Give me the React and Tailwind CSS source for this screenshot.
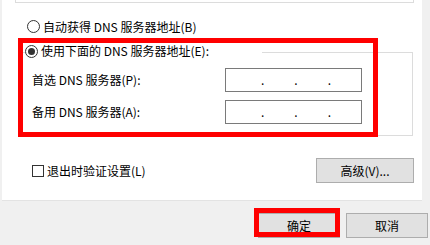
export default function App() {
  const font = "font-['Noto_Sans_CJK_SC','Noto_Sans',sans-serif]"

  const Radio = ({ checked }) => (
    <div className="w-[13px] h-[13px] rounded-full border border-[#333] bg-white flex items-center justify-center shrink-0">
      {checked && <div className="w-[7px] h-[7px] rounded-full bg-[#333]"></div>}
    </div>
  )

  const IpBox = () => (
    <div className="w-[137px] h-[24px] border border-[#7a7a7a] bg-white flex items-center pl-[35px] gap-[30px] text-[12px] leading-none">
      <span>.</span>
      <span>.</span>
      <span>.</span>
    </div>
  )

  const Button = ({ children, className = '' }) => (
    <div className={`h-[25px] border border-[#adadad] bg-[#e1e1e1] flex items-center justify-center text-[12px] leading-none text-black ${className}`}>
      {children}
    </div>
  )

  return (
    <div className={`w-[430px] h-[245px] bg-[#f0f0f0] overflow-hidden text-black ${font}`}>
      {/* 白色面板 */}
      <div className="ml-[2px] w-[420px] h-[201px] bg-white border-b border-[#e3e3e3]">
        {/* 上一个分组框的底边 */}
        <div className="ml-[13px] w-[399px] h-[3px] border-b border-x border-[#dcdcdc]"></div>

        {/* 自动获得 */}
        <div className="ml-[25px] mt-[17px] h-[13px] flex items-center gap-[3px] text-[12px] leading-none">
          <Radio />
          <span>自动获得 DNS 服务器地址(B)</span>
        </div>

        {/* DNS 分组 */}
        <div className="relative ml-[18px] mt-[5px] pt-[14px]">
          <div className="w-[393px] border border-[#dcdcdc] pt-[15px] pb-[11px] pl-[11px] flex flex-col gap-[8px]">
            <div className="flex items-center text-[12px] leading-none">
              <span className="w-[193px]">首选 DNS 服务器(P):</span>
              <IpBox />
            </div>
            <div className="flex items-center text-[12px] leading-none">
              <span className="w-[193px]">备用 DNS 服务器(A):</span>
              <IpBox />
            </div>
          </div>

          {/* 分组标题 */}
          <div className="absolute left-[5px] top-[6px] w-[237px] h-[14px] bg-white flex items-center gap-[3px] text-[12px] leading-none">
            <Radio checked />
            <span>使用下面的 DNS 服务器地址(E):</span>
          </div>

          {/* 红框标注 */}
          <div className="absolute left-[-2px] top-0 w-[360px] h-[99px] border-[5px] border-[#ff0000]"></div>
        </div>

        {/* 退出时验证 + 高级 */}
        <div className="mt-[22px] h-[25px] pl-[30px] pr-[8px] flex items-center justify-between">
          <div className="flex items-center gap-[3px] text-[12px] leading-none">
            <div className="w-[12px] h-[12px] border border-[#333] bg-white"></div>
            <span>退出时验证设置(L)</span>
          </div>
          <Button className="w-[98px]">高级(V)...</Button>
        </div>
      </div>

      {/* 底部按钮 */}
      <div className="mt-[12px] pr-[2px] flex justify-end gap-[6px]">
        <div className="relative">
          <Button className="w-[82px]">确定</Button>
          <div className="absolute left-[-4px] top-[-5px] w-[86px] h-[29px] border-[5px] border-[#ff0000]"></div>
        </div>
        <Button className="w-[82px]">取消</Button>
      </div>
    </div>
  )
}
